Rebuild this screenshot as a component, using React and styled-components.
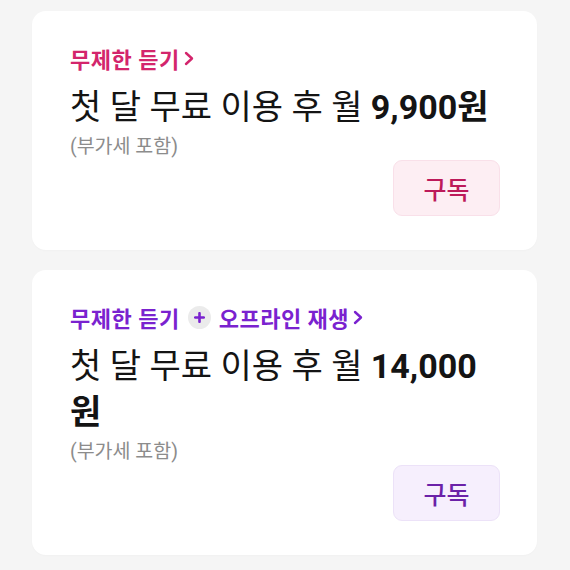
import React from "react";
import styled, { createGlobalStyle } from "styled-components";

const plans = [
    {
        id: "basic",
        tone: "pink",
        title: ["무제한 듣기"],
        price: "9,900",
    },
    {
        id: "offline",
        tone: "purple",
        title: ["무제한 듣기", "오프라인 재생"],
        price: "14,000",
    },
];

const tones = {
    pink: { title: "#d3256c", text: "#bd1a5a", bg: "#fdeef3", border: "#f9e0e9" },
    purple: { title: "#7a22cf", text: "#6b21a8", bg: "#f6effd", border: "#ece2f8" },
};

function Chevron({ color }) {
    return (
        <svg width="10" height="15" viewBox="0 0 10 15" fill="none">
            <path d="M2 2 L8 7.5 L2 13" stroke={color} strokeWidth="2.4" strokeLinecap="round" strokeLinejoin="round" />
        </svg>
    );
}

function PlusBadge({ color }) {
    return (
        <Badge>
            <svg width="11" height="11" viewBox="0 0 11 11">
                <path d="M5.5 1.2 V9.8 M1.2 5.5 H9.8" stroke={color} strokeWidth="2.6" strokeLinecap="round" />
            </svg>
        </Badge>
    );
}

function PlanCard({ plan }) {
    const tone = tones[plan.tone];
    return (
        <Card>
            <Title $color={tone.title}>
                {plan.title.map((part, i) => (
                    <React.Fragment key={part}>
                        {i > 0 && <PlusBadge color={tone.title} />}
                        <span>{part}</span>
                    </React.Fragment>
                ))}
                <Chevron color={tone.title} />
            </Title>
            <Headline>
                첫 달 무료 이용 후 월 <Price>{plan.price}원</Price>
            </Headline>
            <Note>(부가세 포함)</Note>
            <Actions>
                <SubscribeButton $tone={tone}>구독</SubscribeButton>
            </Actions>
        </Card>
    );
}

export default function App() {
    return (
        <>
            <GlobalStyle />
            <Page>
                {plans.map((plan) => (
                    <PlanCard key={plan.id} plan={plan} />
                ))}
            </Page>
        </>
    );
}

const GlobalStyle = createGlobalStyle`
body {
    margin: 0;
    background: #f5f5f5;
    font-family: Roboto, "Noto Sans CJK KR", "Noto Sans", sans-serif;
}
`

const Page = styled.div`
display: flex;
flex-direction: column;
gap: 20px;
padding: 11px 33px 15px 32px;
min-height: 570px;
box-sizing: border-box;
`

const Card = styled.div`
display: flex;
flex-direction: column;
background: #ffffff;
border-radius: 14px;
padding: 33px 37px 34px 38px;
box-shadow: 0 1px 2px rgba(0, 0, 0, 0.02);
`

const Title = styled.div`
display: flex;
align-items: center;
gap: 4px;
height: 28px;
font-size: 22px;
letter-spacing: 0.5px;
font-weight: 700;
color: ${(p) => p.$color};

svg {
    flex: none;
}
`

const Badge = styled.span`
display: inline-flex;
align-items: center;
justify-content: center;
width: 23px;
height: 23px;
border-radius: 50%;
background: #ebebeb;
margin: 0 4px;
`

const Headline = styled.div`
margin-top: 12px;
font-size: 34px;
line-height: 46px;
font-weight: 400;
color: #141414;
`

const Price = styled.span`
font-weight: 700;
`

const Note = styled.div`
margin-top: 5px;
font-size: 19.5px;
line-height: 24px;
color: #8c8c8c;
`

const Actions = styled.div`
display: flex;
justify-content: flex-end;
margin-top: 1px;
`

const SubscribeButton = styled.button`
width: 107px;
height: 56px;
border-radius: 9px;
border: 1px solid ${(p) => p.$tone.border};
background: ${(p) => p.$tone.bg};
color: ${(p) => p.$tone.text};
font-family: inherit;
font-size: 25px;
font-weight: 500;
cursor: pointer;
`
